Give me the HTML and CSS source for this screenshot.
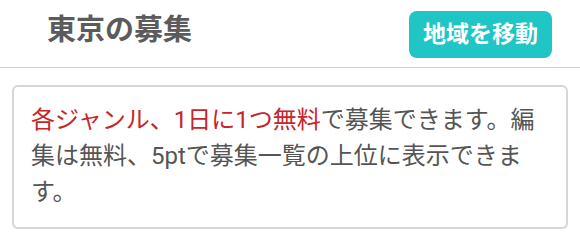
FILE: index.html
```html
<!DOCTYPE html>
<html lang="ja">
<head>
<meta charset="utf-8">
<link rel="stylesheet" href="styles.css">
</head>
<body>
<header class="header">
  <h1 class="title">東京の募集</h1>
  <button class="area-btn">地域を移動</button>
</header>
<main class="content">
  <div class="notice">
    <p class="notice-text"><span class="accent">各ジャンル、1日に1つ無料</span>で募集できます。編集は無料、5ptで募集一覧の上位に表示できます。</p>
  </div>
</main>
</body>
</html>
```

FILE: styles.css
```css
html, body {
  margin: 0;
  padding: 0;
  background: #ffffff;
  font-family: Roboto, "Noto Sans CJK JP", sans-serif;
}

.header {
  display: flex;
  align-items: flex-start;
  justify-content: space-between;
  padding: 10px 28px 0 47px;
  border-bottom: 1px solid #cfcfcf;
  height: 57px;
}

.title {
  margin: 0;
  font-size: 29px;
  line-height: 40px;
  font-weight: 700;
  color: #5b5b5b;
}

.area-btn {
  margin-top: 1px;
  height: 47px;
  padding: 0 14px;
  border: none;
  border-radius: 8px;
  background: #20c5c5;
  color: #ffffff;
  font-family: Roboto, "Noto Sans CJK JP", sans-serif;
  font-size: 23px;
  font-weight: 700;
  line-height: 47px;
}

.content {
  padding: 17px 12px 0 12px;
}

.notice {
  border: 2px solid #d6d6d6;
  border-radius: 6px;
  padding: 15px 16px 17px 17px;
  box-shadow: 0 1px 1px rgba(0,0,0,0.06);
}

.notice-text {
  margin: 0;
  font-size: 24px;
  line-height: 36px;
  color: #555555;
}

.accent {
  color: #c8242b;
}
```
